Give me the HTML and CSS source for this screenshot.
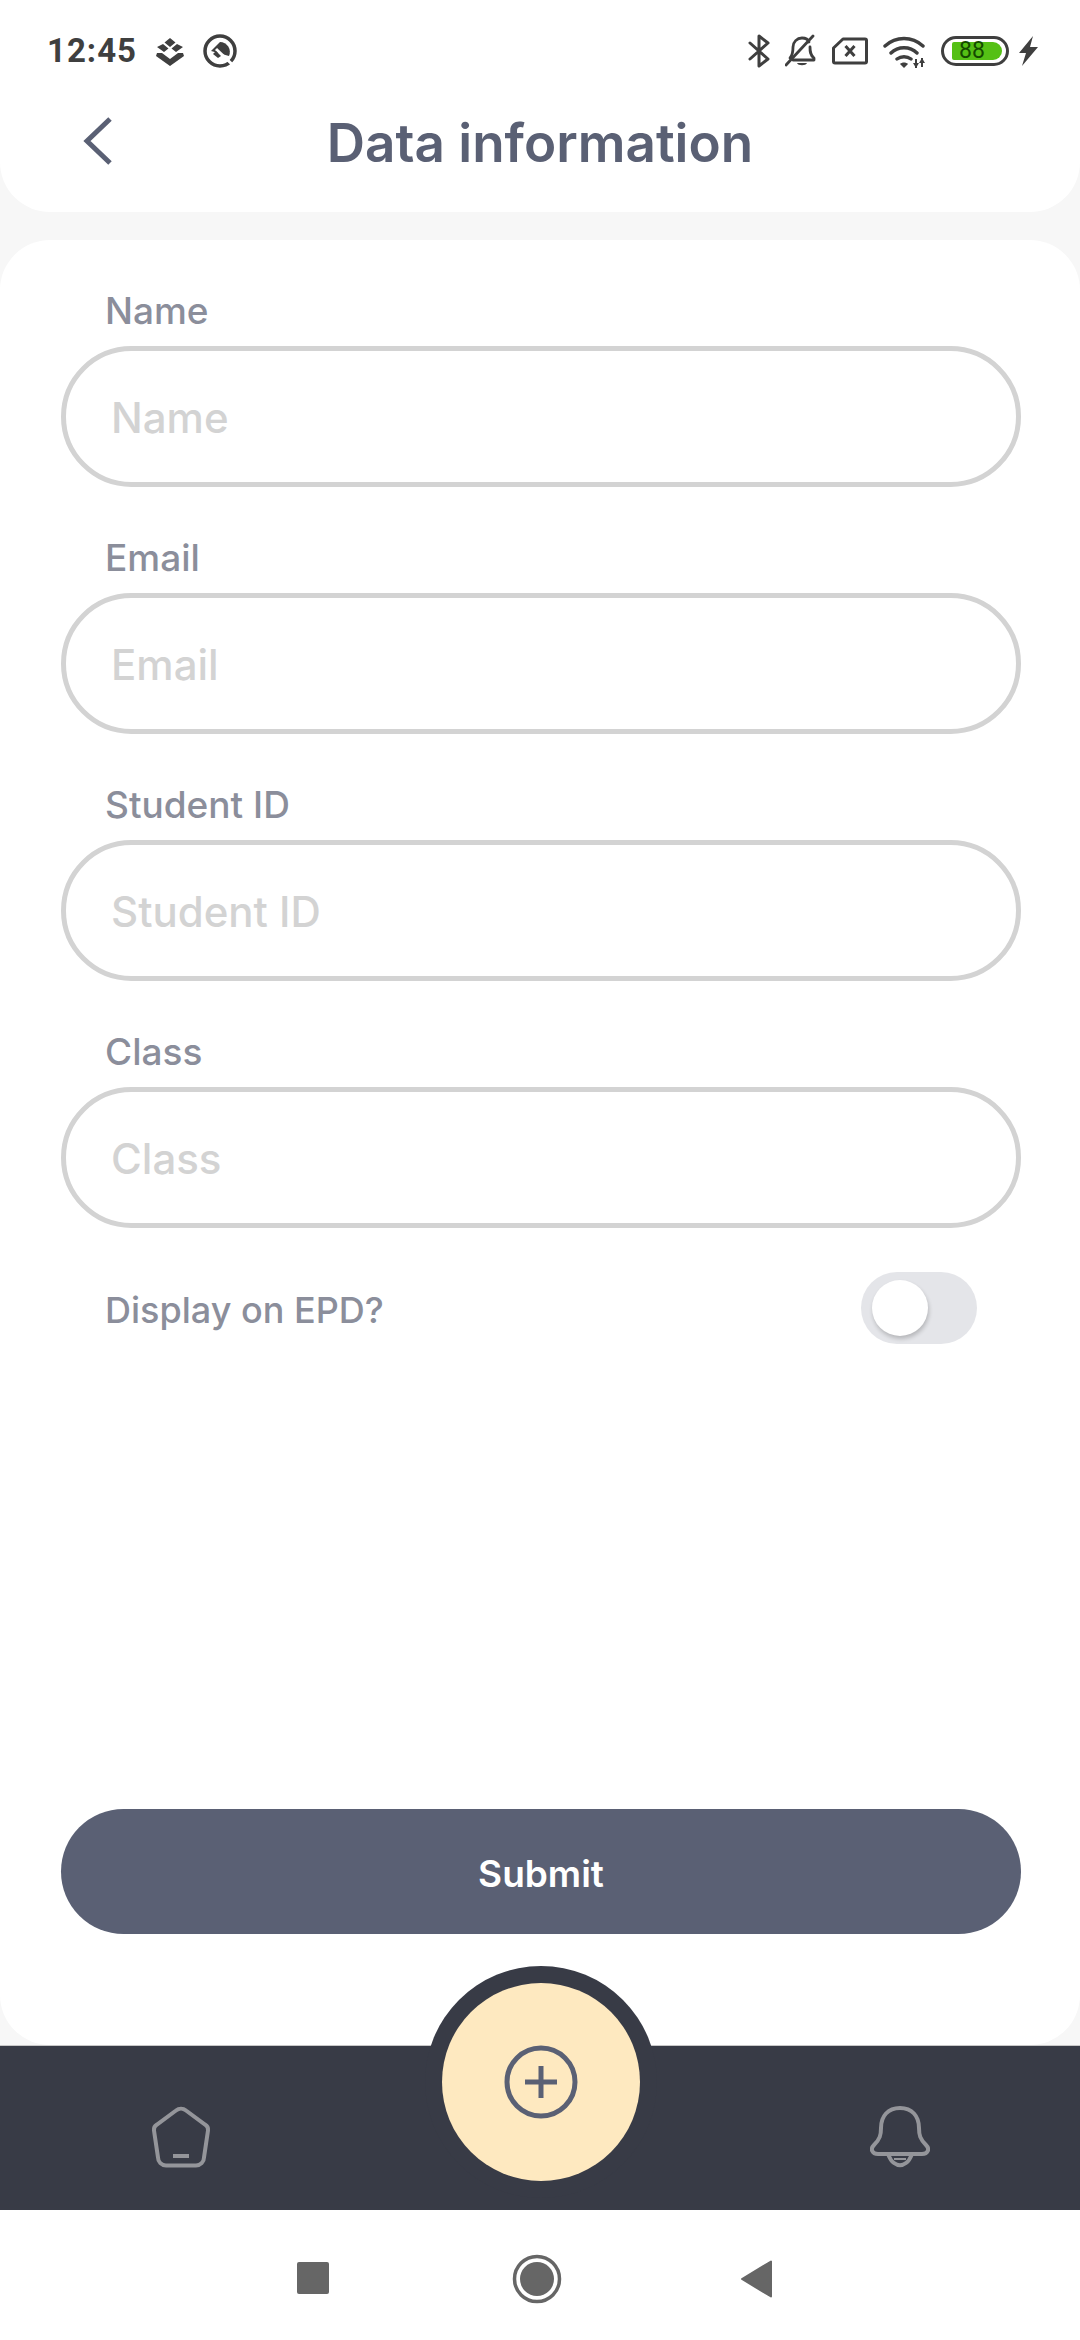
FILE: index.html
```html
<!DOCTYPE html>
<html lang="en">
<head>
    <meta charset="UTF-8">
    <meta name="viewport" content="width=device-width, initial-scale=1.0">
    <title>Data information</title>
    <link rel="stylesheet" href="styles.css">
</head>
<body>
    <!-- Status bar and title -->
    <header class="top">
        <div class="status">
            <div class="status-left">
                <span class="time">12:45</span>
                <svg class="st-layers" width="28" height="28" viewBox="0 0 28 28">
                    <path d="M14 0l5.500 4.500-5.500 4.500-5.500-4.500zM7 6l5.500 4.500-4.500 3.500-7-5zM21 6l6 3-7 5-4.500-3.500zM1 15l5 0 8 6 8-6 5 0 1 3-14 10-14-10z" fill="#3f3f3f"/>
                </svg>
                <svg class="st-q" width="34" height="34" viewBox="0 0 34 34">
                    <circle cx="17" cy="17" r="15" fill="none" stroke="#3f3f3f" stroke-width="3.500"/>
                    <path d="M8 17L17 8a10 10 0 0 1 9 14z" fill="#3f3f3f"/>
                    <path d="M13 15l19 18" stroke="#fff" stroke-width="3"/>
                    <path d="M10 20l3-3 5 5-3 2z" fill="#3f3f3f"/>
                </svg>
            </div>
            <div class="status-right">
                <svg class="st-bt" width="22" height="34" viewBox="0 0 22 34">
                    <path d="M2 9l18 16-9 7V2l9 7L2 25" fill="none" stroke="#3f3f3f" stroke-width="3" stroke-linejoin="round" stroke-linecap="round"/>
                </svg>
                <svg class="st-bell" width="33" height="33" viewBox="0 0 33 33">
                    <path d="M5 24c3-3 3-7 3-11 0-5 4-9 9-9 3 0 6 1 7 4M25 13c0 4 0 8 4 11v2H8" fill="none" stroke="#3f3f3f" stroke-width="2.800" stroke-linecap="round" stroke-linejoin="round"/>
                    <path d="M1 31L28 2" stroke="#3f3f3f" stroke-width="2.800" stroke-linecap="round"/>
                    <path d="M12 29h10c-1 3-9 3-10 0z" fill="#3f3f3f"/>
                </svg>
                <svg class="st-sim" width="36" height="28" viewBox="0 0 36 28">
                    <path d="M11 2h22a1.500 1.500 0 0 1 1.500 1.500v21a1.500 1.500 0 0 1-1.500 1.500H3a1.500 1.500 0 0 1-1.500-1.500V11z" fill="none" stroke="#3f3f3f" stroke-width="3" stroke-linejoin="round"/>
                    <path d="M13.500 9l9 10M22.500 9l-9 10" stroke="#3f3f3f" stroke-width="3"/>
                </svg>
                <svg class="st-wifi" width="42" height="33" viewBox="0 0 42 33">
                    <path d="M2 10c11-10 27-10 38 0M8 17c7-7 19-7 26 0M14 23c4-3 10-3 14 0" fill="none" stroke="#3f3f3f" stroke-width="3.400" stroke-linecap="round"/>
                    <path d="M17 28c2-2 6-2 8 0l-4 4z" fill="#3f3f3f"/>
                    <path d="M33 23v9M39 22v9" stroke="#3f3f3f" stroke-width="2"/>
                    <path d="M30 27l3 5 3-5zM36 27l3-5 3 5z" fill="#3f3f3f"/>
                </svg>
                <div class="battery"><div class="battery-fill">88</div></div>
                <svg class="st-bolt" width="19" height="30" viewBox="0 0 19 30">
                    <path d="M14 0L0 17h7L3 30l16-19h-8z" fill="#3f3f3f"/>
                </svg>
            </div>
        </div>
        <div class="titlebar">
            <svg class="back" width="30" height="50" viewBox="0 0 30 50">
                <path d="M27 3L4 25l23 22" fill="none" stroke="#5a6074" stroke-width="5"/>
            </svg>
            <h1>Data information</h1>
        </div>
    </header>

    <!-- Form card -->
    <main class="card">
        <div class="field">
            <label for="f-name">Name</label>
            <input type="text" id="f-name" placeholder="Name">
        </div>
        <div class="field">
            <label for="f-email">Email</label>
            <input type="text" id="f-email" placeholder="Email">
        </div>
        <div class="field">
            <label for="f-id">Student ID</label>
            <input type="text" id="f-id" placeholder="Student ID">
        </div>
        <div class="field">
            <label for="f-class">Class</label>
            <input type="text" id="f-class" placeholder="Class">
        </div>
        <div class="toggle-row">
            <span class="toggle-label">Display on EPD?</span>
            <div class="toggle"><div class="knob"></div></div>
        </div>
        <button class="submit" type="button">Submit</button>
    </main>

    <!-- Tab bar -->
    <nav class="tabs">
        <svg class="tab-icon" width="62" height="62" viewBox="0 0 62 62">
            <path d="M26 4.500a8 8 0 0 1 10 0l19 14a6 6 0 0 1 3 6l-4 27a8 8 0 0 1-8 8H16a8 8 0 0 1-8-8l-4-27a6 6 0 0 1 3-6z" fill="none" stroke="#94959a" stroke-width="4"/>
            <path d="M23 50h16" stroke="#94959a" stroke-width="4"/>
        </svg>
        <div class="fab-ring">
            <div class="fab">
                <svg width="76" height="76" viewBox="0 0 76 76">
                    <circle cx="38" cy="38" r="34" fill="none" stroke="#5a6074" stroke-width="5"/>
                    <path d="M22 38h32M38 22v32" stroke="#5a6074" stroke-width="5"/>
                </svg>
            </div>
        </div>
        <svg class="tab-icon" width="60" height="62" viewBox="0 0 60 62">
            <path d="M30 2C18 2 11 10 11 22c0 7-1 11-7 17-4 4-2 9 4 9h44c6 0 8-5 4-9-6-6-7-10-7-17C49 10 42 2 30 2z" fill="none" stroke="#94959a" stroke-width="4"/>
            <path d="M18 48c2 5 4 8 6 9 4 3 8 3 12 0 2-1 4-4 6-9" fill="none" stroke="#94959a" stroke-width="4"/>
            <path d="M24 53h12" stroke="#94959a" stroke-width="2"/>
        </svg>
    </nav>

    <!-- Android navigation -->
    <footer class="sysnav">
        <div class="nav-square"></div>
        <svg class="nav-home" width="50" height="50" viewBox="0 0 50 50">
            <circle cx="25" cy="25" r="22.500" fill="none" stroke="#666" stroke-width="3.500"/>
            <circle cx="25" cy="25" r="17" fill="#666"/>
        </svg>
        <svg class="nav-back" width="32" height="38" viewBox="0 0 32 38">
            <path d="M30 1.500v35L1 19z" fill="#666" stroke="#666" stroke-width="2" stroke-linejoin="round"/>
        </svg>
    </footer>
</body>
</html>
```

FILE: styles.css
```css
* {
    box-sizing: border-box;
}
body {
    margin: 0;
    width: 1080px;
    height: 2340px;
    display: flex;
    flex-direction: column;
    overflow: hidden;
    background-color: #f7f7f7;
    font-family: Inter, "Liberation Sans", sans-serif;
}

/* header */
.top {
    height: 212px;
    flex: none;
    background: white;
    border-radius: 0 0 50px 50px;
}
.status {
    height: 102px;
    padding: 34px 42px 0 47px;
    display: flex;
    justify-content: space-between;
    align-items: flex-start;
}
.status-left {
    display: flex;
    align-items: flex-start;
}
.time {
    font-family: Roboto, sans-serif;
    font-size: 33px;
    font-weight: 700;
    line-height: 34px;
    letter-spacing: 1px;
    color: #3f3f3f;
    width: 109px;
}
.st-layers {
    margin-top: 4px;
}
.st-q {
    margin-left: 19px;
}
.status-right {
    display: flex;
    align-items: flex-start;
}
.st-bell {
    margin-left: 15px;
}
.st-sim {
    margin-left: 14px;
    margin-top: 3px;
}
.st-wifi {
    margin-left: 15px;
    margin-top: 2px;
}
.battery {
    width: 68px;
    height: 30px;
    margin-left: 16px;
    margin-top: 2px;
    padding: 2.5px 0;
    border: 3.5px solid #3f3f3f;
    border-radius: 15px;
}
.battery-fill {
    width: 50px;
    height: 18px;
    margin-left: 8px;
    padding-left: 7px;
    background: #55c015;
    border-radius: 2px 9px 9px 2px;
    font-family: Roboto, sans-serif;
    font-size: 23px;
    line-height: 18px;
    color: #144a00;
}
.st-bolt {
    margin-left: 10px;
    margin-top: 2px;
}
.titlebar {
    position: relative;
    height: 80px;
    padding-top: 2px;
    display: flex;
    align-items: center;
    justify-content: center;
}
.back {
    position: absolute;
    left: 83px;
    top: 14px;
}
h1 {
    margin: 0;
    font-size: 53px;
    font-weight: 600;
    color: #5a6074;
}

/* form card */
.card {
    flex: 1;
    margin-top: 28px;
    background: white;
    border-radius: 50px;
    padding: 48px 59px 111px 61px;
    display: flex;
    flex-direction: column;
}
.field {
    margin-bottom: 48px;
}
.field label {
    display: block;
    height: 58px;
    padding-left: 44px;
    font-size: 37px;
    font-weight: 550;
    line-height: 46px;
    color: #8b8e9b;
}
.field input {
    display: block;
    width: 100%;
    height: 141px;
    padding: 2px 45px 0;
    border: 5px solid #d3d3d3;
    border-radius: 71px;
    background: white;
    font-family: inherit;
    font-size: 42px;
    font-weight: 550;
}
.field input::placeholder {
    color: #d3d3d3;
    opacity: 1;
}
.toggle-row {
    display: flex;
    align-items: center;
    justify-content: space-between;
    height: 72px;
    margin-top: -4px;
    padding: 0 44px 0 44px;
}
.toggle-label {
    padding-top: 3px;
    font-size: 36px;
    font-weight: 550;
    color: #8b8e9b;
}
.toggle {
    width: 116px;
    height: 72px;
    padding: 8px 11px;
    background: #e4e5e9;
    border-radius: 36px;
}
.knob {
    width: 56px;
    height: 56px;
    border-radius: 50%;
    background: white;
    box-shadow: 1px 3px 4px rgba(0, 0, 0, 0.2);
}
.submit {
    margin-top: auto;
    height: 125px;
    padding-top: 4px;
    border: none;
    border-radius: 63px;
    background-color: #5a6074;
    color: white;
    font-family: inherit;
    font-size: 37px;
    font-weight: 600;
}

/* tab bar */
.tabs {
    position: relative;
    height: 165px;
    flex: none;
    padding: 60px 150px 0 150px;
    display: flex;
    justify-content: space-between;
    align-items: flex-start;
    background: #383b46;
    border-top: 1px solid #c8c8c8;
}
.fab-ring {
    position: absolute;
    left: 425px;
    top: -80px;
    width: 232px;
    height: 232px;
    padding: 17px;
    border-radius: 50%;
    background: #383b46;
}
.fab {
    width: 198px;
    height: 198px;
    border-radius: 50%;
    background: #fee9c0;
    display: flex;
    align-items: center;
    justify-content: center;
}

/* android nav */
.sysnav {
    height: 130px;
    flex: none;
    padding: 44px 0 0 297px;
    display: flex;
    align-items: flex-start;
    background: white;
}
.nav-square {
    width: 32px;
    height: 32px;
    margin-top: 8px;
    border-radius: 2px;
    background: #666;
}
.nav-home {
    margin-left: 183px;
}
.nav-back {
    margin-left: 179px;
    margin-top: 6px;
}
```
